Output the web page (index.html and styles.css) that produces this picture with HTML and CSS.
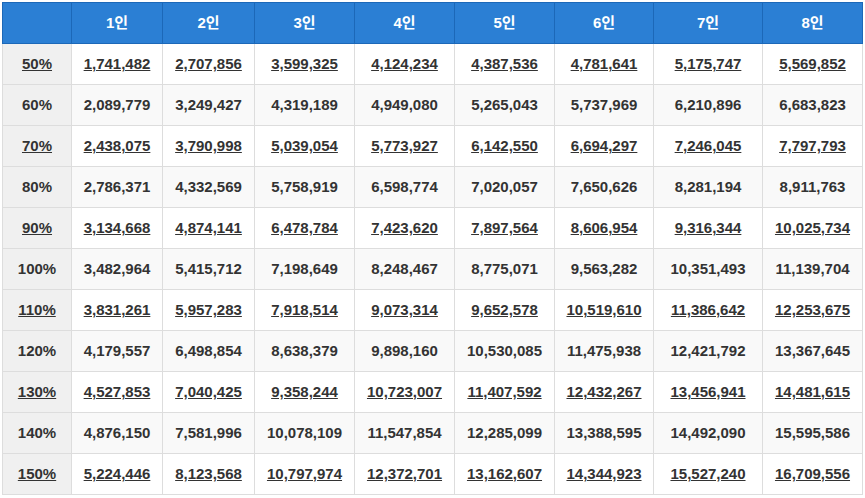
FILE: index.html
```html
<!DOCTYPE html>
<html lang="ko">
<head>
<meta charset="utf-8">
<title>가구원수별 기준중위소득</title>
<link rel="stylesheet" href="styles.css">
</head>
<body>
<table class="income">
  <colgroup>
    <col class="c0"><col class="c1"><col class="c2"><col class="c3"><col class="c4"><col class="c5"><col class="c6"><col class="c7"><col class="c8">
  </colgroup>
  <thead>
    <tr><th></th><th>1인</th><th>2인</th><th>3인</th><th>4인</th><th>5인</th><th>6인</th><th>7인</th><th>8인</th></tr>
  </thead>
  <tbody>
    <tr class="link"><td class="pct"><a href="#">50%</a></td><td><a href="#">1,741,482</a></td><td><a href="#">2,707,856</a></td><td><a href="#">3,599,325</a></td><td><a href="#">4,124,234</a></td><td><a href="#">4,387,536</a></td><td><a href="#">4,781,641</a></td><td><a href="#">5,175,747</a></td><td><a href="#">5,569,852</a></td></tr>
    <tr class="alt"><td class="pct">60%</td><td>2,089,779</td><td>3,249,427</td><td>4,319,189</td><td>4,949,080</td><td>5,265,043</td><td>5,737,969</td><td>6,210,896</td><td>6,683,823</td></tr>
    <tr class="link"><td class="pct"><a href="#">70%</a></td><td><a href="#">2,438,075</a></td><td><a href="#">3,790,998</a></td><td><a href="#">5,039,054</a></td><td><a href="#">5,773,927</a></td><td><a href="#">6,142,550</a></td><td><a href="#">6,694,297</a></td><td><a href="#">7,246,045</a></td><td><a href="#">7,797,793</a></td></tr>
    <tr class="alt"><td class="pct">80%</td><td>2,786,371</td><td>4,332,569</td><td>5,758,919</td><td>6,598,774</td><td>7,020,057</td><td>7,650,626</td><td>8,281,194</td><td>8,911,763</td></tr>
    <tr class="link"><td class="pct"><a href="#">90%</a></td><td><a href="#">3,134,668</a></td><td><a href="#">4,874,141</a></td><td><a href="#">6,478,784</a></td><td><a href="#">7,423,620</a></td><td><a href="#">7,897,564</a></td><td><a href="#">8,606,954</a></td><td><a href="#">9,316,344</a></td><td><a href="#">10,025,734</a></td></tr>
    <tr class="alt"><td class="pct">100%</td><td>3,482,964</td><td>5,415,712</td><td>7,198,649</td><td>8,248,467</td><td>8,775,071</td><td>9,563,282</td><td>10,351,493</td><td>11,139,704</td></tr>
    <tr class="link"><td class="pct"><a href="#">110%</a></td><td><a href="#">3,831,261</a></td><td><a href="#">5,957,283</a></td><td><a href="#">7,918,514</a></td><td><a href="#">9,073,314</a></td><td><a href="#">9,652,578</a></td><td><a href="#">10,519,610</a></td><td><a href="#">11,386,642</a></td><td><a href="#">12,253,675</a></td></tr>
    <tr class="alt"><td class="pct">120%</td><td>4,179,557</td><td>6,498,854</td><td>8,638,379</td><td>9,898,160</td><td>10,530,085</td><td>11,475,938</td><td>12,421,792</td><td>13,367,645</td></tr>
    <tr class="link"><td class="pct"><a href="#">130%</a></td><td><a href="#">4,527,853</a></td><td><a href="#">7,040,425</a></td><td><a href="#">9,358,244</a></td><td><a href="#">10,723,007</a></td><td><a href="#">11,407,592</a></td><td><a href="#">12,432,267</a></td><td><a href="#">13,456,941</a></td><td><a href="#">14,481,615</a></td></tr>
    <tr class="alt"><td class="pct">140%</td><td>4,876,150</td><td>7,581,996</td><td>10,078,109</td><td>11,547,854</td><td>12,285,099</td><td>13,388,595</td><td>14,492,090</td><td>15,595,586</td></tr>
    <tr class="link"><td class="pct"><a href="#">150%</a></td><td><a href="#">5,224,446</a></td><td><a href="#">8,123,568</a></td><td><a href="#">10,797,974</a></td><td><a href="#">12,372,701</a></td><td><a href="#">13,162,607</a></td><td><a href="#">14,344,923</a></td><td><a href="#">15,527,240</a></td><td><a href="#">16,709,556</a></td></tr>
  </tbody>
</table>
</body>
</html>
```

FILE: styles.css
```css
html, body {
  margin: 0;
  padding: 0;
  background: #ffffff;
}
body {
  padding: 2px;
  font-family: "Liberation Sans", Arial, "Noto Sans CJK KR", sans-serif;
}
.income {
  border-collapse: collapse;
  table-layout: fixed;
  width: 860px;
  font-size: 15px;
  font-weight: bold;
  color: #333333;
}
.c0 { width: 69px; }
.c1 { width: 91px; }
.c2 { width: 92px; }
.c3 { width: 100px; }
.c4 { width: 100px; }
.c5 { width: 100px; }
.c6 { width: 99px; }
.c7 { width: 109px; }
.c8 { width: 100px; }
.income th {
  background: #2b7fd4;
  color: #ffffff;
  border: 1px solid #1c68b8;
  height: 40px;
  padding: 0;
  line-height: 40px;
  text-align: center;
  font-weight: bold;
  font-family: "Liberation Sans", Arial, "Noto Sans CJK KR", sans-serif;
}
.income td {
  border: 1px solid #dddddd;
  height: 40px;
  padding: 0;
  line-height: 40px;
  text-align: center;
  background: #ffffff;
}
.income tr.alt td {
  background: #f9f9f9;
}
.income td.pct,
.income tr.alt td.pct {
  background: #f0f0f0;
}
.income a {
  color: #333333;
  text-decoration: underline;
}
```
